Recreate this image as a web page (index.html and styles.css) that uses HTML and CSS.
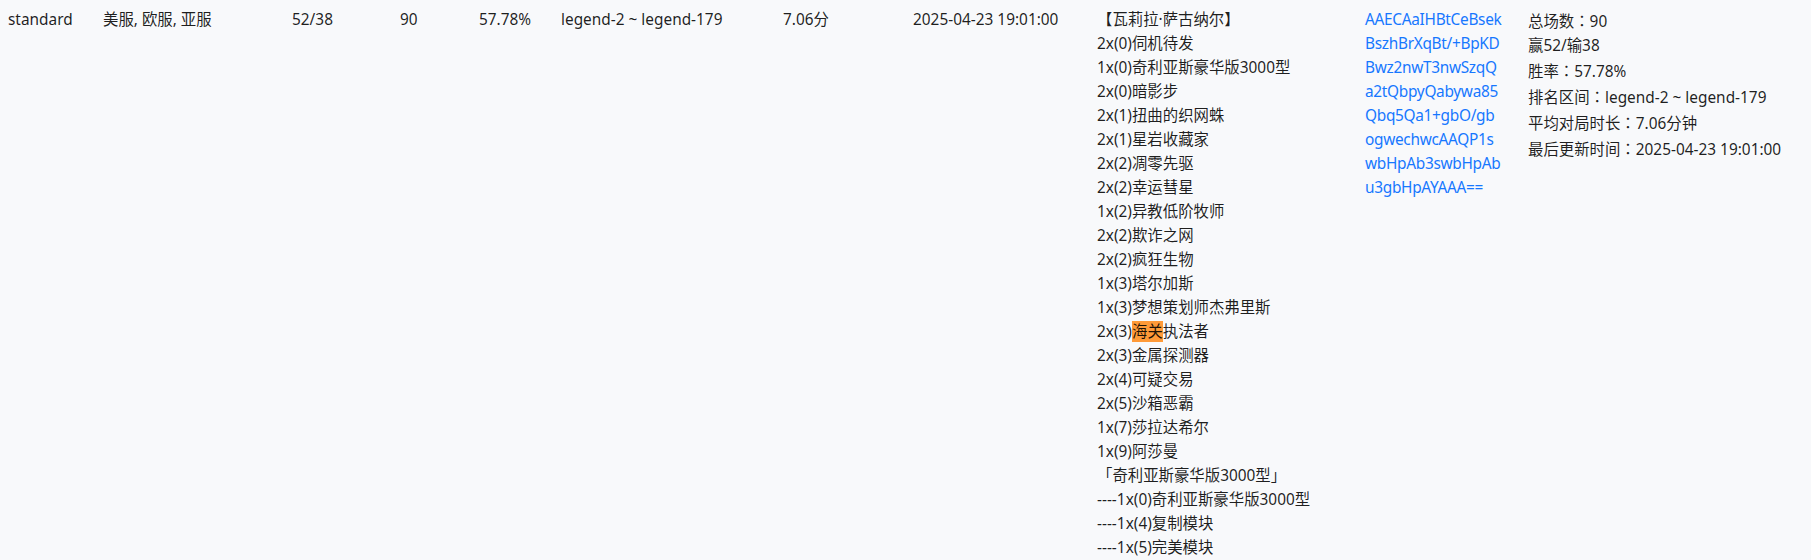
FILE: index.html
```html
<!DOCTYPE html>
<html lang="zh-CN">

<head>
    <meta charset="UTF-8">
    <meta name="viewport" content="width=device-width, initial-scale=1.0">
    <title>卡组统计</title>
    <link rel="stylesheet" href="styles.css">
</head>

<body>
    <table class="deck-table">
        <colgroup>
            <col class="c-mode">
            <col class="c-region">
            <col class="c-record">
            <col class="c-games">
            <col class="c-rate">
            <col class="c-rank">
            <col class="c-time">
            <col class="c-updated">
            <col class="c-cards">
            <col class="c-code">
            <col class="c-summary">
        </colgroup>
        <tbody>
            <tr>
                <td>standard</td>
                <td>美服, 欧服, 亚服</td>
                <td>52/38</td>
                <td>90</td>
                <td>57.78%</td>
                <td>legend-2 ~ legend-179</td>
                <td>7.06分</td>
                <td>2025-04-23 19:01:00</td>
                <td>
                    <div class="card-list">
                        <div>【瓦莉拉·萨古纳尔】</div>
                        <div>2x(0)伺机待发</div>
                        <div>1x(0)奇利亚斯豪华版3000型</div>
                        <div>2x(0)暗影步</div>
                        <div>2x(1)扭曲的织网蛛</div>
                        <div>2x(1)星岩收藏家</div>
                        <div>2x(2)凋零先驱</div>
                        <div>2x(2)幸运彗星</div>
                        <div>1x(2)异教低阶牧师</div>
                        <div>2x(2)欺诈之网</div>
                        <div>2x(2)疯狂生物</div>
                        <div>1x(3)塔尔加斯</div>
                        <div>1x(3)梦想策划师杰弗里斯</div>
                        <div>2x(3)<mark>海关</mark>执法者</div>
                        <div>2x(3)金属探测器</div>
                        <div>2x(4)可疑交易</div>
                        <div>2x(5)沙箱恶霸</div>
                        <div>1x(7)莎拉达希尔</div>
                        <div>1x(9)阿莎曼</div>
                        <div>「奇利亚斯豪华版3000型」</div>
                        <div>----1x(0)奇利亚斯豪华版3000型</div>
                        <div>----1x(4)复制模块</div>
                        <div>----1x(5)完美模块</div>
                    </div>
                </td>
                <td>
                    <a class="deck-code" href="#">
                        <span>AAECAaIHBtCeBsek</span>
                        <span>BszhBrXqBt/+BpKD</span>
                        <span>Bwz2nwT3nwSzqQ</span>
                        <span>a2tQbpyQabywa85</span>
                        <span>Qbq5Qa1+gbO/gb</span>
                        <span>ogwechwcAAQP1s</span>
                        <span>wbHpAb3swbHpAb</span>
                        <span>u3gbHpAYAAA==</span>
                    </a>
                </td>
                <td>
                    <div class="summary">
                        <div>总场数<span class="colon" lang="ja">：</span>90</div>
                        <div>赢52/输38</div>
                        <div>胜率<span class="colon" lang="ja">：</span>57.78%</div>
                        <div>排名区间<span class="colon" lang="ja">：</span>legend-2 ~ legend-179</div>
                        <div>平均对局时长<span class="colon" lang="ja">：</span>7.06分钟</div>
                        <div>最后更新时间<span class="colon" lang="ja">：</span>2025-04-23 19:01:00</div>
                    </div>
                </td>
            </tr>
        </tbody>
    </table>
</body>

</html>
```

FILE: styles.css
```css
* {
    margin: 0;
    padding: 0;
    box-sizing: border-box;
}

body {
    font-family: 'Noto Sans', 'Noto Sans CJK SC', sans-serif;
    font-size: 15.4px;
    line-height: 24px;
    background: #f8f9fb;
    color: rgba(0, 0, 0, 0.88);
}

.deck-table {
    width: 1811px;
    table-layout: fixed;
    border-collapse: collapse;
}

.deck-table td {
    padding: 8px;
    vertical-align: top;
    text-align: left;
}

.c-mode { width: 95px; }
.c-region { width: 189px; }
.c-record { width: 108px; }
.c-games { width: 79px; }
.c-rate { width: 82px; }
.c-rank { width: 222px; }
.c-time { width: 130px; }
.c-updated { width: 184px; }
.c-cards { width: 268px; }
.c-code { width: 163px; }
.c-summary { width: 291px; }

.card-list mark {
    background: #ff9a38;
    color: inherit;
}

.deck-code {
    display: block;
    color: #1677ff;
    text-decoration: none;
    letter-spacing: -0.3px;
}

.deck-code span {
    display: block;
    white-space: nowrap;
}

.summary .colon {
    font-family: 'Noto Sans CJK JP', sans-serif;
}
```
